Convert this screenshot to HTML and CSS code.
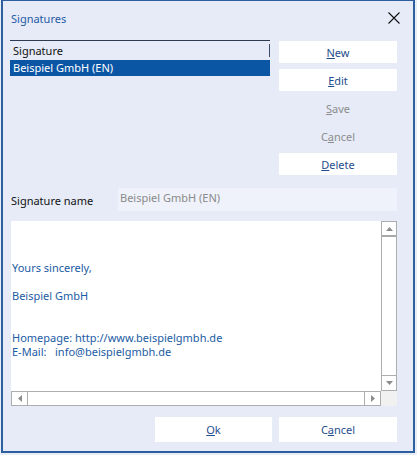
FILE: index.html
```html
<!DOCTYPE html>
<html>
<head>
<meta charset="utf-8">
<link rel="stylesheet" href="styles.css">
</head>
<body>
<div class="window">
  <div class="titlebar">
    <span class="title">Signatures</span>
    <svg class="close" width="12" height="12" viewBox="0 0 12 12"><path d="M0.5 0.5 L11.5 11.5 M11.5 0.5 L0.5 11.5" stroke="#111" stroke-width="1.1" fill="none"/></svg>
  </div>
  <div class="content">
    <div class="top">
      <div class="list">
        <div class="list-header"><span>Signature</span></div>
        <div class="list-row selected">Beispiel GmbH (EN)</div>
      </div>
      <div class="buttons">
        <div class="btn"><u>N</u>ew</div>
        <div class="btn"><u>E</u>dit</div>
        <div class="btn disabled"><u>S</u>ave</div>
        <div class="btn disabled">C<u>a</u>ncel</div>
        <div class="btn"><u>D</u>elete</div>
      </div>
    </div>
    <div class="name-row">
      <span class="label">Signature name</span>
      <div class="input">Beispiel GmbH (EN)</div>
    </div>
    <div class="editor">
      <div class="editor-main">
        <div class="editor-text">
          <div class="line gap-a">Yours sincerely,</div>
          <div class="line gap-b">Beispiel GmbH</div>
          <div class="line">Homepage: http://www.beispielgmbh.de</div>
          <div class="line">E-Mail:&nbsp;&nbsp; info@beispielgmbh.de</div>
        </div>
        <div class="vscroll">
          <div class="sb-btn sb-up"><svg width="7" height="4" viewBox="0 0 7 4"><path d="M0 4 L3.5 0 L7 4 Z" fill="#8c8c8c"/></svg></div>
          <div class="sb-track"></div>
          <div class="sb-btn sb-down"><svg width="7" height="4" viewBox="0 0 7 4"><path d="M0 0 L3.5 4 L7 0 Z" fill="#8c8c8c"/></svg></div>
        </div>
      </div>
      <div class="editor-bottom">
        <div class="hscroll">
          <div class="sb-btn sb-left"><svg width="4" height="7" viewBox="0 0 4 7"><path d="M4 0 L0 3.5 L4 7 Z" fill="#8c8c8c"/></svg></div>
          <div class="sb-track"></div>
          <div class="sb-btn sb-right"><svg width="4" height="7" viewBox="0 0 4 7"><path d="M0 0 L4 3.5 L0 7 Z" fill="#8c8c8c"/></svg></div>
        </div>
        <div class="corner"></div>
      </div>
    </div>
    <div class="footer">
      <div class="btn big"><u>O</u>k</div>
      <div class="btn big">C<u>a</u>ncel</div>
    </div>
  </div>
</div>
</body>
</html>
```

FILE: styles.css
```css
* { box-sizing: border-box; }
html, body { margin: 0; padding: 0; }
body {
  width: 417px;
  height: 455px;
  background: #e9edf7;
  font-family: "Noto Sans", "Open Sans", sans-serif;
  font-size: 11px;
  overflow: hidden;
}
.window {
  margin-left: 1px;
  width: 414px;
  height: 453px;
  background: #e6ebf7;
  border-style: solid;
  border-color: #2d5e9e;
  border-width: 1px 2px 2px 2px;
  display: flex;
  flex-direction: column;
}
.titlebar {
  height: 34px;
  display: flex;
  align-items: center;
  justify-content: space-between;
  padding: 0 13px 0 8px;
}
.title {
  color: #1f5aa6;
}
.close { display: block; margin-top: -1px; }
.content {
  padding: 0 16px 0 7px;
  display: flex;
  flex-direction: column;
}
.top {
  display: flex;
  margin-top: 5px;
}
.list {
  width: 260px;
  border-top: 1px solid #2e3a52;
}
.list-header {
  height: 19px;
  padding: 3px 0 0 0;
  display: flex;
}
.list-header span {
  flex: 1;
  padding-left: 3px;
  border-right: 1px solid #3c4c6a;
  line-height: 13px;
  height: 13px;
  color: #111;
}
.list-row {
  height: 16px;
  line-height: 16px;
  padding-left: 3px;
}
.list-row.selected {
  background: #0a56a5;
  color: #fff;
}
.buttons {
  margin-left: 9px;
  width: 118px;
  padding-top: 1px;
  display: flex;
  flex-direction: column;
  gap: 6px;
}
.btn {
  height: 22px;
  background: #fff;
  color: #1f4d8e;
  display: flex;
  align-items: center;
  justify-content: center;
}
.btn.disabled {
  background: transparent;
  color: #8d8d8d;
}
.name-row {
  display: flex;
  align-items: flex-start;
  margin-top: 13px;
}
.label {
  width: 108px;
  padding-left: 1px;
  padding-top: 5px;
  color: #111;
}
.input {
  flex: 1;
  height: 23px;
  background: #eff2fa;
  color: #8a8a8a;
  padding: 1px 0 0 2px;
  line-height: 17px;
}
.editor {
  margin: 10px 0 0 1px;
  height: 185px;
  background: #fff;
  display: flex;
  flex-direction: column;
}
.editor-main {
  flex: 1;
  display: flex;
  min-height: 0;
}
.editor-text {
  flex: 1;
  padding: 40px 0 0 1px;
  color: #1b5ba3;
  line-height: 14px;
}
.gap-a { margin-bottom: 14px; }
.gap-b { margin-bottom: 28px; }
.vscroll {
  width: 16px;
  border-left: 1px solid #adadad;
  border-right: 1px solid #adadad;
  display: flex;
  flex-direction: column;
}
.sb-btn {
  display: flex;
  align-items: center;
  justify-content: center;
}
.sb-btn svg { display: block; }
.sb-up {
  height: 16px;
  border-top: 1px solid #adadad;
  border-bottom: 2px solid #a8a8a8;
}
.sb-down {
  height: 16px;
  border-top: 1px solid #adadad;
  border-bottom: 1px solid #adadad;
}
.vscroll .sb-track { flex: 1; }
.editor-bottom {
  height: 15px;
  display: flex;
}
.hscroll {
  flex: 1;
  display: flex;
  border: 1px solid #adadad;
}
.sb-left {
  width: 16px;
  border-right: 1px solid #adadad;
}
.sb-right {
  width: 16px;
  border-left: 1px solid #adadad;
}
.hscroll .sb-track { flex: 1; }
.corner {
  width: 16px;
  background: #f1f1f2;
}
.footer {
  display: flex;
  justify-content: flex-end;
  gap: 7px;
  margin-top: 11px;
}
.btn.big {
  width: 117px;
  height: 25px;
}
.footer .btn.big:last-child { width: 118px; }
```
